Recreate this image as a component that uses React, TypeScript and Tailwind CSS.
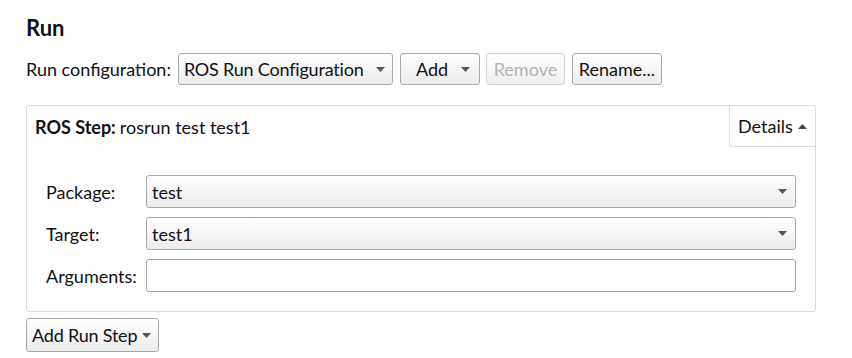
const Caret = ({ up = false }: { up?: boolean }) => (
  <svg width="9" height="5" viewBox="0 0 9 5" className="shrink-0">
    {up ? <path d="M0 5 L4.5 0 L9 5 Z" fill="#444" /> : <path d="M0 0 L9 0 L4.5 5 Z" fill="#555" />}
  </svg>
);

const btn =
  "flex items-center rounded-[3px] border border-[#a9a9a9] bg-gradient-to-b from-white to-[#ececec] text-[#111]";

function SelectBox({ value }: { value: string }) {
  return (
    <div className={`${btn} h-[33px] flex-1 justify-between pl-[5px] pr-[8px]`}>
      <span>{value}</span>
      <Caret />
    </div>
  );
}

function Row({ label, children }: { label: string; children: React.ReactNode }) {
  return (
    <div className="flex items-center">
      <span className="w-[100px] shrink-0">{label}</span>
      {children}
    </div>
  );
}

export default function App() {
  return (
    <div
      className="w-[852px] h-[358px] bg-white pl-[26px] pr-[36px] pt-[14px] text-[18px] text-[#111] leading-none"
      style={{ fontFamily: '"Source Sans Pro", Lato, "Noto Sans", sans-serif' }}
    >
      <h1 className="text-[22px] font-bold h-[28px] flex items-center">Run</h1>

      <div className="mt-[11px] flex items-center h-[32px]">
        <span className="mr-[7px]">Run configuration:</span>
        <div className={`${btn} h-[32px] w-[215px] justify-between pl-[5px] pr-[7px]`}>
          <span className="tracking-[-0.2px]">ROS Run Configuration</span>
          <Caret />
        </div>
        <div className={`${btn} h-[32px] w-[80px] ml-[7px] justify-between pl-[15px] pr-[9px]`}>
          <span>Add</span>
          <Caret />
        </div>
        <div className="ml-[6px] h-[32px] w-[79px] flex items-center justify-center rounded-[3px] border border-[#d3d3d3] bg-gradient-to-b from-white to-[#f0f0f0] text-[#b3b3b3]">
          Remove
        </div>
        <div className={`${btn} h-[32px] w-[90px] ml-[7px] justify-center`}>Rename...</div>
      </div>

      <div className="mt-[20px] w-[790px] h-[207px] rounded-[3px] border border-[#dcdcdc] flex flex-col">
        <div className="flex h-[41px] shrink-0">
          <div className="flex-1 flex items-center pl-[8px]">
            <span className="font-bold mr-[4px]">ROS Step:</span>
            <span>rosrun test test1</span>
          </div>
          <div className="w-[86px] flex items-center gap-[5px] pl-[8px] border-l border-b border-[#dcdcdc] rounded-bl-[3px]">
            <span>Details</span>
            <Caret up />
          </div>
        </div>
        <div className="mt-[28px] flex flex-col gap-[9px] pl-[19px] pr-[19px]">
          <Row label="Package:">
            <SelectBox value="test" />
          </Row>
          <Row label="Target:">
            <SelectBox value="test1" />
          </Row>
          <Row label="Arguments:">
            <div className="h-[33px] flex-1 rounded-[3px] border border-[#a9a9a9] bg-white" />
          </Row>
        </div>
      </div>

      <div className={`${btn} mt-[6px] h-[34px] w-[133px] gap-[5px] pl-[5px] tracking-[-0.2px]`}>
        <span>Add Run Step</span>
        <Caret />
      </div>
    </div>
  );
}
